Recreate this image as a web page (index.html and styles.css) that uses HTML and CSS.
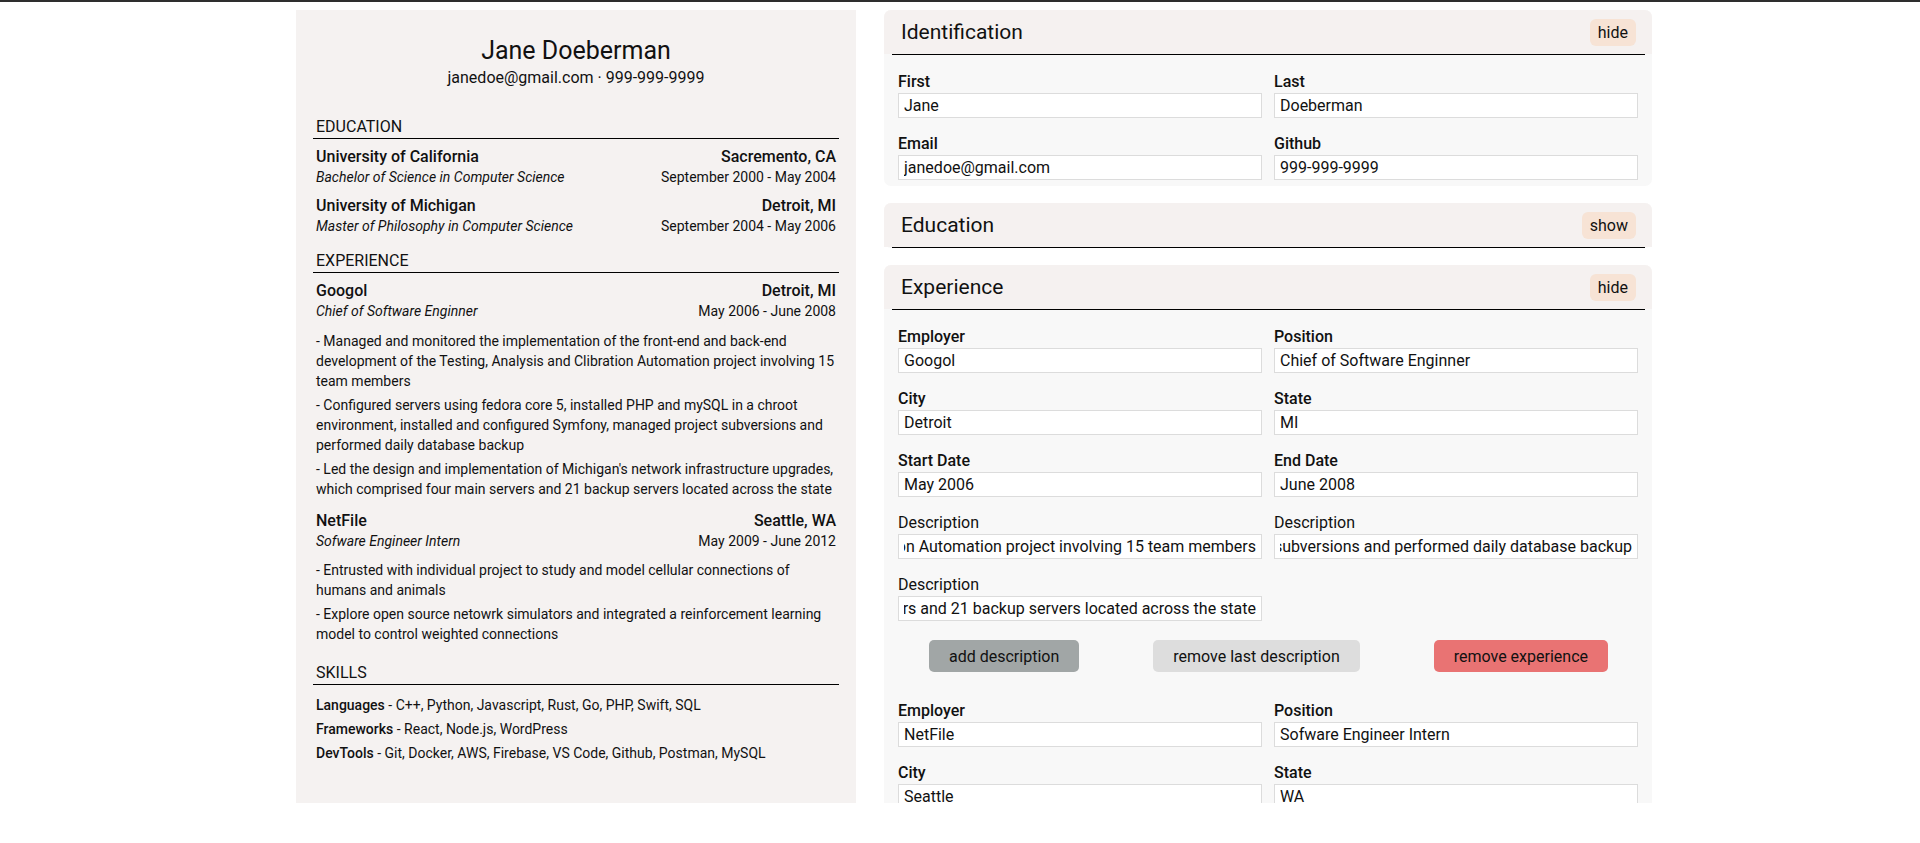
FILE: index.html
```html
<!DOCTYPE html>
<html lang="en">
<head>
<meta charset="utf-8">
<title>Resume Builder</title>
<link rel="stylesheet" href="styles.css">
</head>
<body>
<div class="topbar"></div>
<main class="app">
  <section class="resume">
    <header class="resume-head">
      <h1 class="name">Jane Doeberman</h1>
      <p class="contact">janedoe@gmail.com · 999-999-9999</p>
    </header>

    <section class="r-section">
      <h2 class="r-title">EDUCATION</h2>
      <div class="r-item">
        <div class="r-row r-main"><span>University of California</span><span>Sacremento, CA</span></div>
        <div class="r-row r-sub"><em>Bachelor of Science in Computer Science</em><span>September 2000 - May 2004</span></div>
      </div>
      <div class="r-item">
        <div class="r-row r-main"><span>University of Michigan</span><span>Detroit, MI</span></div>
        <div class="r-row r-sub"><em>Master of Philosophy in Computer Science</em><span>September 2004 - May 2006</span></div>
      </div>
    </section>

    <section class="r-section">
      <h2 class="r-title">EXPERIENCE</h2>
      <div class="r-item">
        <div class="r-row r-main"><span>Googol</span><span>Detroit, MI</span></div>
        <div class="r-row r-sub"><em>Chief of Software Enginner</em><span>May 2006 - June 2008</span></div>
        <ul class="r-bullets">
          <li>- Managed and monitored the implementation of the front-end and back-end development of the Testing, Analysis and Clibration Automation project involving 15 team members</li>
          <li>- Configured servers using fedora core 5, installed PHP and mySQL in a chroot environment, installed and configured Symfony, managed project subversions and performed daily database backup</li>
          <li>- Led the design and implementation of Michigan's network infrastructure upgrades, which comprised four main servers and 21 backup servers located across the state</li>
        </ul>
      </div>
      <div class="r-item">
        <div class="r-row r-main"><span>NetFile</span><span>Seattle, WA</span></div>
        <div class="r-row r-sub"><em>Sofware Engineer Intern</em><span>May 2009 - June 2012</span></div>
        <ul class="r-bullets">
          <li>- Entrusted with individual project to study and model cellular connections of humans and animals</li>
          <li>- Explore open source netowrk simulators and integrated a reinforcement learning model to control weighted connections</li>
        </ul>
      </div>
    </section>

    <section class="r-section">
      <h2 class="r-title">SKILLS</h2>
      <ul class="r-skills">
        <li><b>Languages</b> - C++, Python, Javascript, Rust, Go, PHP, Swift, SQL</li>
        <li><b>Frameworks</b> - React, Node.js, WordPress</li>
        <li><b>DevTools</b> - Git, Docker, AWS, Firebase, VS Code, Github, Postman, MySQL</li>
      </ul>
    </section>
  </section>

  <section class="editor">
    <div class="card">
      <div class="card-head">
        <h2>Identification</h2>
        <button class="toggle" type="button">hide</button>
      </div>
      <div class="card-rule"></div>
      <div class="card-body">
        <div class="fields">
          <div class="field"><label>First</label><input type="text" value="Jane"></div>
          <div class="field"><label>Last</label><input type="text" value="Doeberman"></div>
          <div class="field"><label>Email</label><input type="text" value="janedoe@gmail.com"></div>
          <div class="field"><label>Github</label><input type="text" value="999-999-9999"></div>
        </div>
      </div>
    </div>

    <div class="card">
      <div class="card-head">
        <h2>Education</h2>
        <button class="toggle" type="button">show</button>
      </div>
      <div class="card-rule"></div>
    </div>

    <div class="card">
      <div class="card-head">
        <h2>Experience</h2>
        <button class="toggle" type="button">hide</button>
      </div>
      <div class="card-rule"></div>
      <div class="card-body">
        <div class="entry">
          <div class="fields">
            <div class="field"><label>Employer</label><input type="text" value="Googol"></div>
            <div class="field"><label>Position</label><input type="text" value="Chief of Software Enginner"></div>
            <div class="field"><label>City</label><input type="text" value="Detroit"></div>
            <div class="field"><label>State</label><input type="text" value="MI"></div>
            <div class="field"><label>Start Date</label><input type="text" value="May 2006"></div>
            <div class="field"><label>End Date</label><input type="text" value="June 2008"></div>
            <div class="field"><label class="plain">Description</label><input class="tail" dir="rtl" type="text" value="Managed and monitored the implementation of the front-end and back-end development of the Testing, Analysis and Clibration Automation project involving 15 team members"></div>
            <div class="field"><label class="plain">Description</label><input class="tail" dir="rtl" type="text" value="Configured servers using fedora core 5, installed PHP and mySQL in a chroot environment, installed and configured Symfony, managed project subversions and performed daily database backup"></div>
            <div class="field"><label class="plain">Description</label><input class="tail" dir="rtl" type="text" value="Led the design and implementation of Michigan's network infrastructure upgrades, which comprised four main servers and 21 backup servers located across the state"></div>
          </div>
          <div class="actions">
            <button class="btn btn-add" type="button">add description</button>
            <button class="btn btn-remove-last" type="button">remove last description</button>
            <button class="btn btn-danger" type="button">remove experience</button>
          </div>
        </div>

        <div class="entry">
          <div class="fields">
            <div class="field"><label>Employer</label><input type="text" value="NetFile"></div>
            <div class="field"><label>Position</label><input type="text" value="Sofware Engineer Intern"></div>
            <div class="field"><label>City</label><input type="text" value="Seattle"></div>
            <div class="field"><label>State</label><input type="text" value="WA"></div>
          </div>
        </div>
      </div>
    </div>
  </section>
</main>
</body>
</html>
```

FILE: styles.css
```css
* {
  box-sizing: border-box;
}

body {
  margin: 0;
  font-family: Roboto, "Liberation Sans", sans-serif;
  color: #111;
  background: #fff;
}

.topbar {
  height: 2px;
  background: #2e2e2e;
}

.app {
  display: flex;
  align-items: flex-start;
  gap: 28px;
  padding: 8px 0 0 296px;
}

/* ---------- Resume preview ---------- */
.resume {
  width: 560px;
  height: 793px;
  flex-shrink: 0;
  background: #f5f2f1;
  padding: 25px 17px 0;
  overflow: hidden;
}

.resume-head {
  text-align: center;
  margin-bottom: 28.5px;
}

.name {
  margin: 0;
  font-size: 25px;
  font-weight: 400;
  line-height: 32px;
}

.contact {
  margin: 1px 0 0;
  font-size: 16px;
  line-height: 20px;
}

.r-section {
  display: flow-root;
}

.r-section + .r-section {
  margin-top: 7.5px;
}

.r-title {
  margin: 0 0 7px;
  padding: 0 3px 1px;
  font-size: 16px;
  font-weight: 400;
  line-height: 20px;
  border-bottom: 1px solid #000;
}

.r-item {
  display: flow-root;
  padding: 0 3px;
  margin-bottom: 7px;
}

.r-row {
  display: flex;
  justify-content: space-between;
}

.r-main {
  font-size: 16px;
  font-weight: 500;
  line-height: 21px;
}

.r-sub {
  font-size: 14px;
  line-height: 21px;
}

.r-sub em {
  font-style: italic;
}

.r-bullets {
  list-style: none;
  margin: 8.5px 0 0;
  padding: 0;
}

.r-bullets li {
  font-size: 14px;
  line-height: 20px;
  margin-bottom: 4px;
}

.r-skills {
  list-style: none;
  margin: 0;
  padding: 3px 3px 0;
}

.r-skills li {
  font-size: 14px;
  line-height: 20px;
  margin-bottom: 4.3px;
}

.r-skills b {
  font-weight: 500;
}

/* ---------- Editor ---------- */
.editor {
  width: 768px;
  height: 793px;
  flex-shrink: 0;
  overflow: hidden;
  display: flex;
  flex-direction: column;
  gap: 17px;
}

.card {
  flex-shrink: 0;
  background: #f8f8f8;
  border-radius: 7px;
}

.card-head {
  display: flex;
  align-items: center;
  justify-content: space-between;
  height: 44px;
  padding: 0 16px 0 17px;
  background: #f5f1f0;
  border-radius: 7px 7px 0 0;
}

.card-head h2 {
  margin: 0;
  font-size: 21px;
  font-weight: 400;
}

.toggle {
  font-family: inherit;
  font-size: 16px;
  line-height: 19px;
  padding: 4px 8px;
  border: 0;
  border-radius: 6px;
  background: #f7e3d5;
  color: #111;
}

.card-rule {
  height: 1px;
  background: #000;
  margin: 0 7px 0 8px;
}

.card-body {
  padding: 17px 14px 6px;
}

.fields {
  display: grid;
  grid-template-columns: 1fr 1fr;
  column-gap: 12px;
  row-gap: 16px;
}

.field label {
  display: block;
  font-size: 16px;
  font-weight: 500;
  line-height: 19px;
  margin-bottom: 2px;
}

.field label.plain {
  font-weight: 400;
}

.field input {
  display: block;
  width: 100%;
  height: 25px;
  margin: 0;
  padding: 0 5px;
  border: 1px solid #dcdcdc;
  border-radius: 0;
  background: #fff;
  color: #111;
  font-family: inherit;
  font-size: 16px;
}

.actions {
  display: flex;
  justify-content: space-between;
  padding: 0 30px 0 31px;
  margin: 19px 0 29px;
}

.btn {
  font-family: inherit;
  font-size: 16px;
  line-height: 19px;
  padding: 6.5px 20px;
  border: 0;
  border-radius: 5px;
  color: #111;
}

.btn-add {
  background: #a1a6a6;
}

.btn-remove-last {
  background: #dddddd;
}

.btn-danger {
  background: #e97373;
}
```
